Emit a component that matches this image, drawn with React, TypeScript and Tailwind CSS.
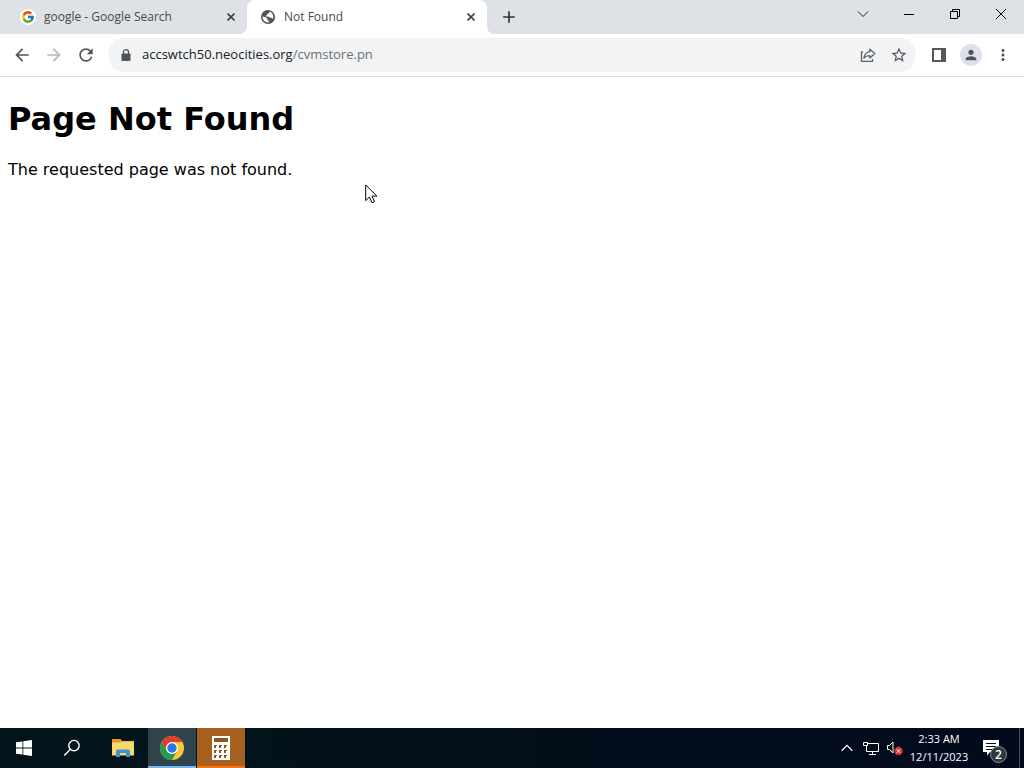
import type { ReactNode } from "react";
import {
  MdAdd,
  MdArrowBack,
  MdArrowForward,
  MdMoreVert,
  MdPerson,
  MdRefresh,
  MdStarBorder,
} from "react-icons/md";
import { FcGoogle } from "react-icons/fc";

const GlobeIcon = () => (
  <svg viewBox="0 0 14 14" className="h-[14px] w-[14px]">
    <circle cx="7" cy="7" r="7" fill="#505357" />
    <path
      d="M8.4 1.5 L8.2 3.2 L6.4 3.8 L6.2 5 L5 5.6 L5.2 6.8 L7.6 6.6 L8.8 7.8 L10.2 7.6 L11 8.6 L12 8.6 C13 5.4 11.4 2.4 8.4 1.5 Z"
      fill="#fff"
    />
    <path
      d="M1.5 6.6 L4 7 L6.6 8.8 L6.2 10.4 L8 10.6 L7.8 12.5 C4.4 12.8 1.4 10.4 1.5 6.6 Z"
      fill="#fff"
    />
  </svg>
);

const LockIcon = () => (
  <svg viewBox="0 0 10 12" className="h-3 w-[10px]">
    <rect x="0.5" y="4.5" width="9" height="7.5" rx="1" fill="#505357" />
    <path
      d="M2.5 5 V3 A2.5 2.3 0 0 1 7.5 3 V5"
      fill="none"
      stroke="#505357"
      strokeWidth="1.3"
    />
  </svg>
);

const ShareIcon = () => (
  <svg viewBox="0 0 16 16" className="h-4 w-4" fill="none" stroke="#5f6368">
    <path d="M3 5 H1.5 V14.3 H12.5 V12" strokeWidth="1.3" />
    <path
      d="M9.8 2.2 L14.8 6.6 L9.8 11 V8.6 C7.2 8.5 5.4 9.3 3.9 11.2 C4.4 7.8 6.2 5.2 9.8 4.7 Z"
      strokeWidth="1.3"
      strokeLinejoin="round"
    />
  </svg>
);

const SidePanelIcon = () => (
  <svg viewBox="0 0 14 14" className="h-[14px] w-[14px]">
    <rect width="14" height="14" fill="#54575b" />
    <rect x="2" y="2" width="7" height="10" fill="#fff" />
  </svg>
);

const WindowsIcon = () => (
  <svg viewBox="0 0 16 16" className="h-4 w-4" fill="#fff">
    <path d="M0 2.3 L6.5 1.4 V7.6 H0 Z M7.3 1.3 L16 0 V7.6 H7.3 Z M0 8.4 H6.5 V14.6 L0 13.7 Z M7.3 8.4 H16 V16 L7.3 14.7 Z" />
  </svg>
);

const SearchIcon = () => (
  <svg
    viewBox="0 0 18 18"
    className="h-[18px] w-[18px]"
    fill="none"
    stroke="#fff"
    strokeWidth="1.4"
  >
    <circle cx="11" cy="6.6" r="5.2" />
    <path d="M7.4 10.3 L1.2 16.5" />
  </svg>
);

const FolderIcon = () => (
  <svg viewBox="0 0 22 18" className="h-[18px] w-[22px]">
    <path d="M0 0 H8.5 L10 2 V6 H0 Z" fill="#e09a24" />
    <path d="M9 2 H22 V6 H9 Z" fill="#f0c04e" />
    <rect y="3.5" width="22" height="13" fill="#f9d96c" />
    <path d="M4 18 V11.8 L5 10.5 H17 L18 11.8 V18 H14 V14 H8 V18 Z" fill="#3f93cf" />
  </svg>
);

const ChromeIcon = () => (
  <svg viewBox="0 0 24 24" className="h-6 w-6">
    <circle cx="12" cy="12" r="12" fill="#fbc934" />
    <path d="M6.8 15 L1.6 6 A12 12 0 0 0 12 24 L17.2 15 L12 18 Z" fill="#1f9d55" />
    <path d="M12 12 L6.8 15 L1.6 6 A12 12 0 0 1 22.4 6 H12 Z" fill="#e33b2e" />
    <circle cx="12" cy="12" r="6" fill="#fff" />
    <circle cx="12" cy="12" r="4.7" fill="#2a79e8" />
  </svg>
);

const CalculatorIcon = () => (
  <svg viewBox="0 0 18 24" className="h-6 w-[18px]">
    <rect width="18" height="24" fill="#fff" />
    <rect x="2" y="2" width="14" height="4" fill="#8f5420" />
    {[9, 14, 19].map((y) =>
      [2, 7, 12].map((x) => (
        <path key={`${x}-${y}`} d={`M${x} ${y} h3 v1 h-1 v2 h-2 z`} fill="#8f5420" />
      )),
    )}
  </svg>
);

const NetworkIcon = () => (
  <svg
    viewBox="0 0 17 15"
    className="h-[15px] w-[17px]"
    fill="none"
    stroke="#fff"
  >
    <path d="M5 2.5 H15.5 V10.5 H3.5 V5" />
    <path d="M9.5 10.5 V13 M6 13.5 H13" />
    <path d="M0.5 1.5 H4.5 V4.5 H0.5 Z" />
  </svg>
);

const MutedIcon = () => (
  <svg viewBox="0 0 17 16" className="h-4 w-[17px]">
    <path d="M1.5 5.5 H3.5 L7 2 V13 L3.5 9.5 H1.5 Z" fill="none" stroke="#fff" />
    <circle cx="12.5" cy="11" r="4.2" fill="#d13438" />
    <path d="M10.7 9.2 L14.3 12.8 M14.3 9.2 L10.7 12.8" stroke="#fff" />
  </svg>
);

const NotificationIcon = () => (
  <svg viewBox="0 0 16 16" className="h-4 w-4">
    <path d="M0 0 H16 V12 H7 L4 15.5 V12 H0 Z" fill="#fff" />
    <path d="M3 3.5 H13 M3 6.5 H13 M3 9.5 H10" stroke="#06101c" />
  </svg>
);

const CursorIcon = () => (
  <svg viewBox="0 0 13 20" className="h-5 w-[13px]">
    <path
      d="M0.7 0.9 V16.6 L4.4 13 L7 18.8 L9.5 17.7 L7 12.1 H11.9 Z"
      fill="#fff"
      stroke="#000"
    />
  </svg>
);

interface TabProps {
  title: string;
  icon: ReactNode;
  active?: boolean;
}

const Tab = ({ title, icon, active }: TabProps) => (
  <div
    className={`relative flex h-[34px] w-60 items-center rounded-t-lg pr-3 pl-[13px] ${
      active ? "bg-white" : ""
    }`}
  >
    {active && (
      <>
        <span className="absolute bottom-0 -left-2 h-2 w-2 bg-[radial-gradient(circle_at_0_0,transparent_8px,#fff_8px)]" />
        <span className="absolute -right-2 bottom-0 h-2 w-2 bg-[radial-gradient(circle_at_100%_0,transparent_8px,#fff_8px)]" />
      </>
    )}
    <button className="flex flex-1 items-center gap-2 text-left text-xs text-[#45494d]">
      <span className="flex w-4 justify-center">{icon}</span>
      {title}
    </button>
    <button aria-label={`Close ${title}`}>
      <svg viewBox="0 0 8 8" className="h-2 w-2" stroke="#3c4043" strokeWidth="1.6">
        <path d="M0.5 0.5 L7.5 7.5 M7.5 0.5 L0.5 7.5" />
      </svg>
    </button>
  </div>
);

const TabStrip = () => (
  <header className="flex h-[34px] bg-[#dee1e6]">
    <div className="flex pl-[7px]">
      <Tab
        title="google - Google Search"
        icon={
          <span className="rounded-full bg-white p-px">
            <FcGoogle className="h-[14px] w-[14px]" />
          </span>
        }
      />
      <Tab title="Not Found" icon={<GlobeIcon />} active />
    </div>
    <button aria-label="New tab" className="ml-3 text-[#303336]">
      <MdAdd className="h-5 w-5" />
    </button>
    <div className="ml-auto flex h-7">
      <button aria-label="Search tabs" className="flex w-[46px] items-center justify-center">
        <svg viewBox="0 0 12 8" className="h-2 w-3" fill="none" stroke="#222">
          <path d="M1 1.5 L6 6.5 L11 1.5" />
        </svg>
      </button>
      <button aria-label="Minimize" className="flex w-[46px] items-center justify-center">
        <span className="h-px w-[10px] bg-black" />
      </button>
      <button aria-label="Restore" className="flex w-[46px] items-center justify-center">
        <svg viewBox="0 0 10 10" className="h-[10px] w-[10px]" fill="none" stroke="#000">
          <path d="M0.5 2.5 H7.5 V9.5 H0.5 Z M2.5 2.5 V0.5 H9.5 V7.5 H7.5" />
        </svg>
      </button>
      <button aria-label="Close window" className="flex w-[46px] items-center justify-center">
        <svg viewBox="0 0 10 10" className="h-[10px] w-[10px]" fill="none" stroke="#000">
          <path d="M0 0 L10 10 M10 0 L0 10" />
        </svg>
      </button>
    </div>
  </header>
);

const Toolbar = () => (
  <nav className="flex h-[43px] items-center border-b border-[#dcdee1] bg-white px-3 text-[#505357]">
    <div className="flex gap-3">
      <button aria-label="Back">
        <MdArrowBack className="h-5 w-5" />
      </button>
      <button aria-label="Forward" className="text-[#b6b8ba]">
        <MdArrowForward className="h-5 w-5" />
      </button>
      <button aria-label="Reload">
        <MdRefresh className="h-5 w-5" />
      </button>
    </div>
    <form className="ml-3 flex h-[34px] flex-1 items-center rounded-full bg-[#f1f3f4] pr-2 pl-[13px]">
      <LockIcon />
      <label htmlFor="address" className="ml-[11px] text-[13px] text-[#202124]">
        accswtch50.neocities.org
      </label>
      <input
        id="address"
        defaultValue="/cvmstore.pn"
        className="min-w-0 flex-1 text-[13px] text-[#6c7075] outline-none"
      />
      <div className="flex items-center gap-[14px]">
        <button type="button" aria-label="Share this page">
          <ShareIcon />
        </button>
        <button type="button" aria-label="Bookmark this tab">
          <MdStarBorder className="h-[18px] w-[18px]" />
        </button>
      </div>
    </form>
    <div className="ml-4 flex items-center">
      <button aria-label="Side panel">
        <SidePanelIcon />
      </button>
      <button aria-label="Profile" className="ml-[14px] rounded-full bg-[#dde1ea] p-[3px]">
        <MdPerson className="h-4 w-4" />
      </button>
      <button aria-label="Menu" className="ml-3">
        <MdMoreVert className="h-[18px] w-[18px]" />
      </button>
    </div>
  </nav>
);

const NotFoundPage = () => (
  <main className="relative flex-1 bg-white px-2 pt-[22px] font-['DejaVu_Sans',sans-serif] text-black">
    <h1 className="text-[32px] leading-10 font-bold">Page Not Found</h1>
    <p className="mt-[21px] text-base leading-5">The requested page was not found.</p>
    <div className="absolute top-[107px] left-[365px]">
      <CursorIcon />
    </div>
  </main>
);

const Taskbar = () => (
  <footer className="flex h-10 bg-linear-to-r from-[#03151b] to-[#020a1b] text-white">
    <button aria-label="Start" className="flex w-12 items-center justify-center">
      <WindowsIcon />
    </button>
    <button aria-label="Search" className="flex w-12 items-center justify-center">
      <SearchIcon />
    </button>
    <div className="ml-[3px] flex gap-px">
      <button aria-label="File Explorer" className="flex w-12 items-center justify-center">
        <FolderIcon />
      </button>
      <button
        aria-label="Google Chrome"
        className="flex w-12 items-center justify-center border-b-2 border-[#76b9ed] bg-[#30444d] pt-[2px]"
      >
        <ChromeIcon />
      </button>
      <button
        aria-label="Calculator"
        className="flex w-12 items-center justify-center border-b-2 border-[#f7750c] bg-[#a8601f] pt-[2px]"
      >
        <CalculatorIcon />
      </button>
    </div>
    <div className="ml-auto flex items-center">
      <button aria-label="Show hidden icons">
        <svg viewBox="0 0 12 8" className="h-2 w-3" fill="none" stroke="#fff" strokeWidth="1.3">
          <path d="M0.7 6.7 L6 1.4 L11.3 6.7" />
        </svg>
      </button>
      <button aria-label="Network" className="ml-[10px]">
        <NetworkIcon />
      </button>
      <button aria-label="Volume muted" className="ml-[6px]">
        <MutedIcon />
      </button>
      <button className="ml-[6px] w-[60px] text-center text-[11px] leading-[18px]">
        2:33 AM
        <br />
        12/11/2023
      </button>
      <button aria-label="Notifications" className="relative ml-[14px]">
        <NotificationIcon />
        <span className="absolute top-[6px] left-[7px] flex h-[17px] w-[17px] items-center justify-center rounded-full border border-[#8b9096] bg-[#30363d] text-xs font-semibold">
          2
        </span>
      </button>
      <button
        aria-label="Show desktop"
        className="ml-5 h-10 w-[5px] border-l border-[#4a5260]"
      />
    </div>
  </footer>
);

const App = () => {
  return (
    <div className="flex min-h-screen flex-col font-['Open_Sans','Noto_Sans',sans-serif]">
      <TabStrip />
      <Toolbar />
      <NotFoundPage />
      <Taskbar />
    </div>
  );
};

export default App;
